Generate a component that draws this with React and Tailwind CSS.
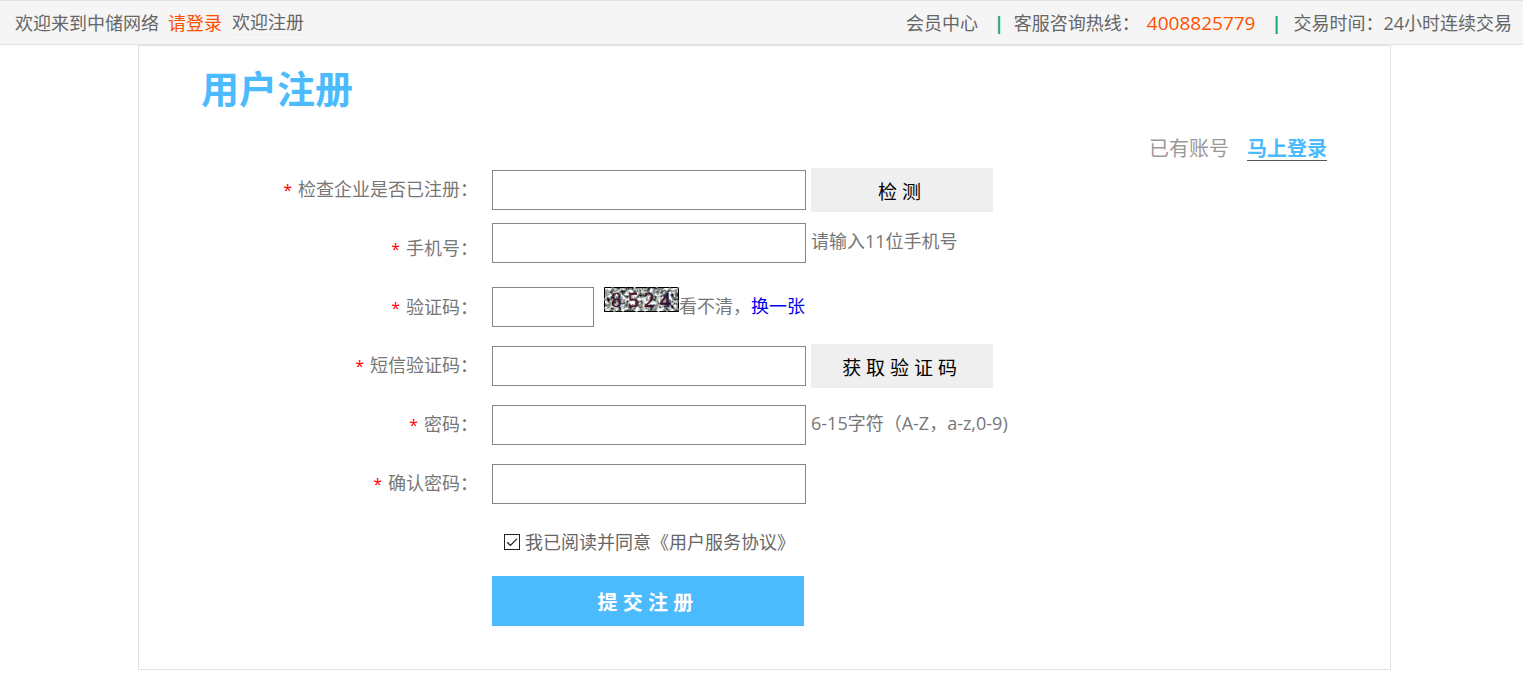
import { useState } from 'react';

const inputBase = 'h-10 border border-[#858585] bg-white px-2 text-[18px] text-[#333] outline-none focus:border-[#4cbbfe]';
const grayButton = 'ml-[5px] h-11 w-[182px] cursor-pointer bg-[#efefef] pt-1 text-[19px] leading-6 text-black';

function Row({ id, label, height = 'h-[59px]', align = 'items-center', children }) {
  return (
    <div className={`flex items-center ${height}`}>
      <label htmlFor={id} className="w-[339px] shrink-0 text-right">
        <span className="mr-[6px] text-[16px] text-[#ff0000]">*</span>
        {label}：
      </label>
      <div className={`ml-[14px] flex h-full ${align}`}>{children}</div>
    </div>
  );
}

function Captcha() {
  return (
    <svg width="75" height="25" viewBox="0 0 75 25" role="img" aria-label="验证码图片" className="ml-[10px] shrink-0">
      <defs>
        <filter id="grain" x="0" y="0" width="100%" height="100%" colorInterpolationFilters="sRGB">
          <feTurbulence type="fractalNoise" baseFrequency="0.28" numOctaves="2" seed="8" />
          <feColorMatrix values="2 0 0 0 -0.36  2 0 0 0 -0.34  2 0 0 0 -0.35  0 0 0 0 1" />
        </filter>
      </defs>
      <rect width="75" height="25" filter="url(#grain)" />
      <rect x="0.5" y="0.5" width="74" height="24" fill="none" stroke="#000" strokeDasharray="7 2 12 1" />
      <g fill="#3c1430" fontFamily="'Liberation Serif', serif" fontSize="21">
        <text x="7" y="20" stroke="#3c1430" strokeWidth="0.4">8</text>
        <text x="24" y="20" stroke="#5a1434" strokeWidth="0.6" fill="#5a1434">5</text>
        <text x="40" y="20" stroke="#3c1430" strokeWidth="0.7">2</text>
        <text x="56" y="20" stroke="#2c1030" strokeWidth="0.7">4</text>
      </g>
    </svg>
  );
}

function Separator({ className }) {
  return <span aria-hidden="true" className={`text-[18px] font-bold text-[#1aa67d] ${className}`}>|</span>;
}

export default function App() {
  const [agreed, setAgreed] = useState(true);

  return (
    <div lang="zh-CN" className="bg-white pb-[15px] font-['Open_Sans','Noto_Sans_CJK_SC',sans-serif] text-[18px] leading-6 text-[#777]">
      <header className="flex h-[45px] items-center justify-between border-y border-[#e2e2e2] bg-[#f5f5f5] pr-[11px] pl-[15px] whitespace-nowrap text-[#666]">
        <div className="flex items-center">
          <span>欢迎来到中储网络</span>
          <a href="#login" className="ml-[9px] text-[#ff5000]">请登录</a>
          <a href="#register" className="ml-[10px] border-b border-[#eeeeee]">欢迎注册</a>
        </div>
        <div className="flex items-center">
          <a href="#member">会员中心</a>
          <Separator className="mr-[10px] ml-4" />
          <span>客服咨询热线：</span>
          <span className="ml-[7px] text-[19px] text-[#ff5000]">4008825779</span>
          <Separator className="mr-[12px] ml-4" />
          <span>交易时间：24小时连续交易</span>
        </div>
      </header>

      <main className="mr-[132px] ml-[138px] border border-[#e2e2e2] pb-[43px]">
        <h1 className="ml-[62px] pt-[18px] text-[38px] leading-[48px] font-bold text-[#4cbbfe]">用户注册</h1>
        <div className="mt-[26px] mr-[63px] flex h-[22px] items-center justify-end text-[20px] leading-[22px]">
          <span className="text-[#999]">已有账号</span>
          <a href="#login" className="ml-[18px] border-b border-[#555] leading-[22px] font-bold text-[#4cbbfe]">马上登录</a>
        </div>

        <form onSubmit={(e) => e.preventDefault()}>
          <Row id="company" label="检查企业是否已注册">
            <input id="company" type="text" className={`${inputBase} w-[314px]`} />
            <button type="button" className={grayButton}>检 测&nbsp;</button>
          </Row>
          <Row id="phone" label="手机号" align="items-start pt-1">
            <input id="phone" type="tel" className={`${inputBase} w-[314px]`} />
            <span className="ml-[5px] pt-[6px]">请输入11位手机号</span>
          </Row>
          <Row id="captcha" label="验证码" height="h-[58px]">
            <input id="captcha" type="text" className={`${inputBase} w-[102px]`} />
            <div className="flex h-10 items-start">
              <Captcha />
              <span className="pt-[7px]">
                看不清，<a href="#captcha" className="text-[#0000ee]">换一张</a>
              </span>
            </div>
          </Row>
          <Row id="sms" label="短信验证码">
            <input id="sms" type="text" className={`${inputBase} w-[314px]`} />
            <button type="button" className={grayButton}>获 取 验 证 码&nbsp;</button>
          </Row>
          <Row id="password" label="密码">
            <input id="password" type="password" className={`${inputBase} w-[314px]`} />
            <span className="ml-[5px] pb-1">6-15字符（A-Z，a-z,0-9)</span>
          </Row>
          <Row id="confirm" label="确认密码">
            <input id="confirm" type="password" className={`${inputBase} w-[314px]`} />
          </Row>

          <div className="ml-[353px]">
            <label className="ml-3 flex h-[58px] items-center text-[#666]">
              <span className="grid size-4 shrink-0">
                <input
                  type="checkbox"
                  checked={agreed}
                  onChange={(e) => setAgreed(e.target.checked)}
                  className="peer col-start-1 row-start-1 size-4 appearance-none border border-[#222] bg-white"
                />
                <svg viewBox="0 0 16 16" className="pointer-events-none col-start-1 row-start-1 hidden size-4 peer-checked:block" fill="none" stroke="#222" strokeWidth="1.3">
                  <path d="M3.2 8.2 6.4 11.4 12.9 4.9" />
                </svg>
              </span>
              <span className="ml-[5px]">我已阅读并同意《用户服务协议》</span>
            </label>
            <button type="submit" className="mt-[5px] block h-[50px] w-[312px] cursor-pointer bg-[#4cbbfe] pt-1 text-[20px] leading-6 font-bold text-white">
              提 交 注 册&nbsp;
            </button>
          </div>
        </form>
      </main>
    </div>
  );
}
